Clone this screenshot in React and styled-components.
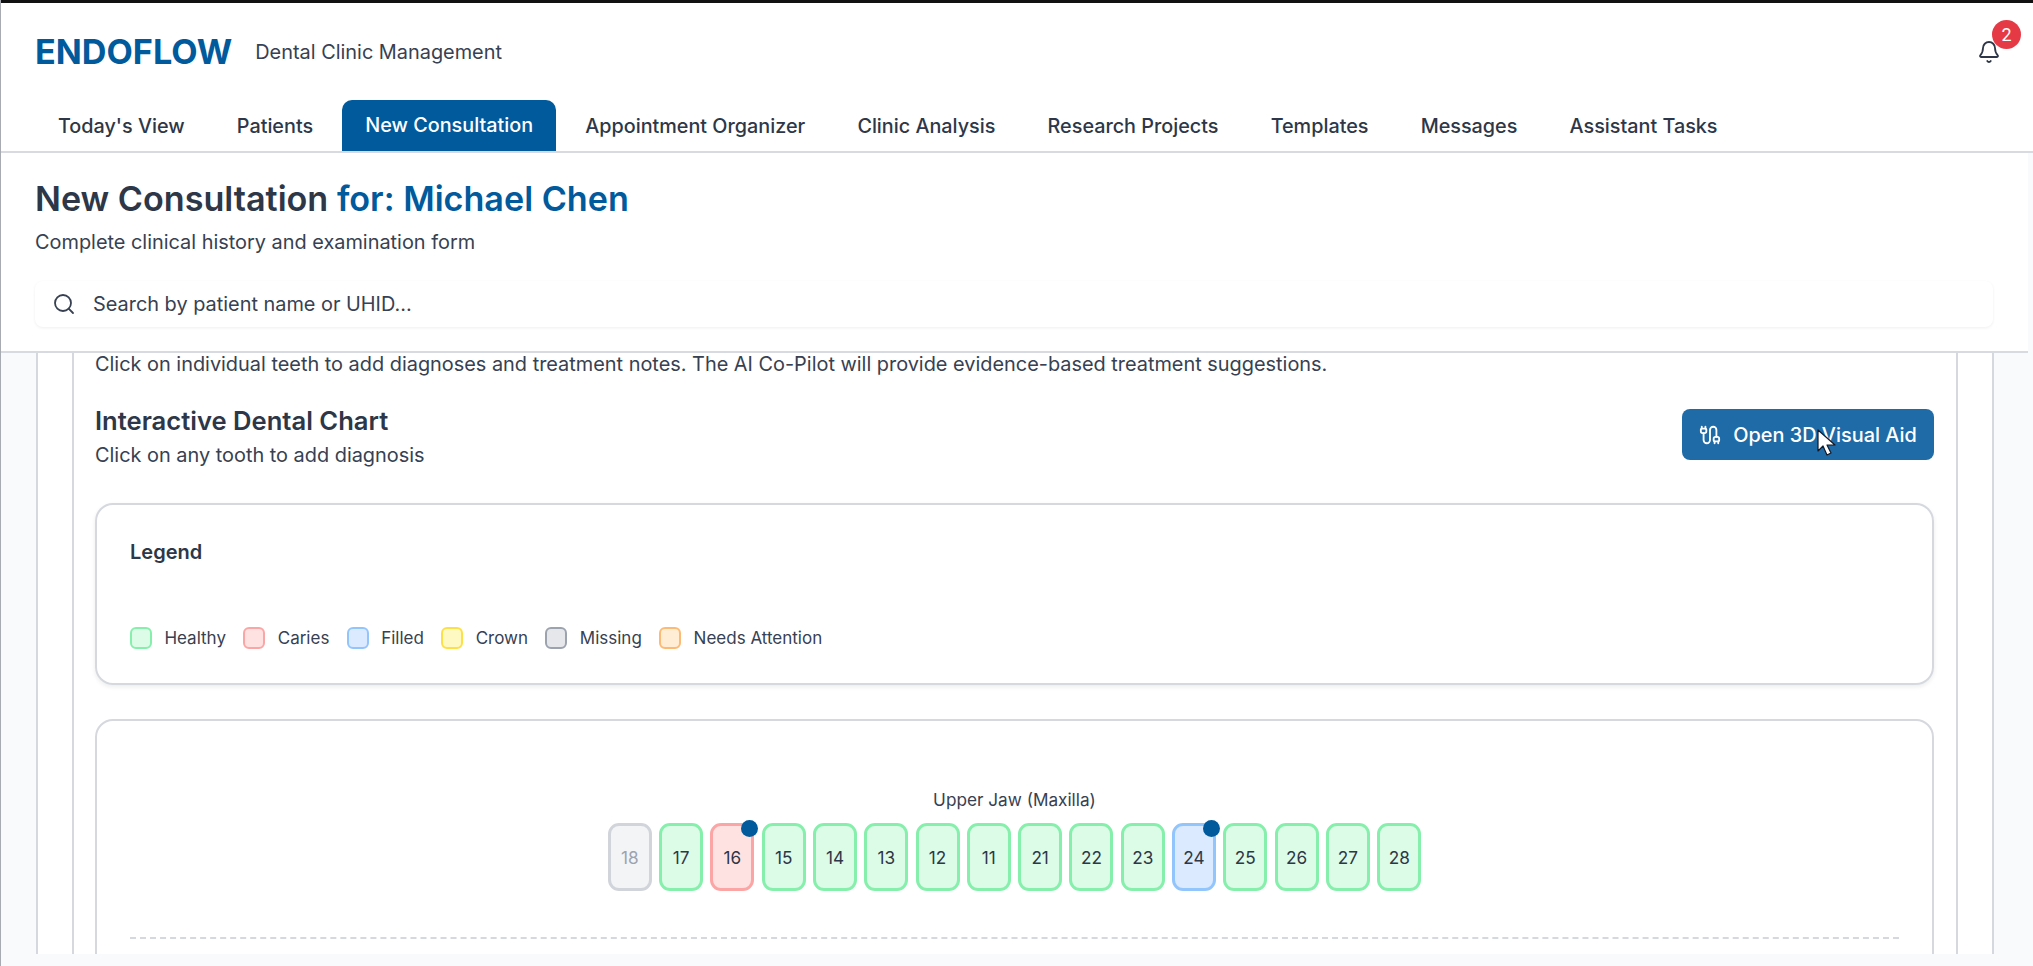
import React from "react";
import styled, { createGlobalStyle } from "styled-components";
import { Bell, Cable, Search } from "lucide-react";

const GlobalStyle = createGlobalStyle`
  html, body {
    margin: 0;
    padding: 0;
    background: #f9fafb;
    overflow: hidden;
  }
  * {
    box-sizing: border-box;
  }
`;

const tabs = [
  "Today's View",
  "Patients",
  "New Consultation",
  "Appointment Organizer",
  "Clinic Analysis",
  "Research Projects",
  "Templates",
  "Messages",
  "Assistant Tasks",
];

const legend = [
  { label: "Healthy", type: "healthy" },
  { label: "Caries", type: "caries" },
  { label: "Filled", type: "filled" },
  { label: "Crown", type: "crown" },
  { label: "Missing", type: "missing" },
  { label: "Needs Attention", type: "attention" },
];

const upperJaw = [
  { n: 18, type: "absent" },
  { n: 17, type: "healthy" },
  { n: 16, type: "caries", marked: true },
  { n: 15, type: "healthy" },
  { n: 14, type: "healthy" },
  { n: 13, type: "healthy" },
  { n: 12, type: "healthy" },
  { n: 11, type: "healthy" },
  { n: 21, type: "healthy" },
  { n: 22, type: "healthy" },
  { n: 23, type: "healthy" },
  { n: 24, type: "filled", marked: true },
  { n: 25, type: "healthy" },
  { n: 26, type: "healthy" },
  { n: 27, type: "healthy" },
  { n: 28, type: "healthy" },
];

const palette = {
  healthy: { bg: "#dcfce7", line: "#86efac" },
  caries: { bg: "#fee2e2", line: "#fca5a5" },
  filled: { bg: "#dbeafe", line: "#93c5fd" },
  crown: { bg: "#fef9c3", line: "#fde047" },
  missing: { bg: "#e5e7eb", line: "#9ca3af" },
  attention: { bg: "#ffedd5", line: "#fdba74" },
  absent: { bg: "#f3f4f6", line: "#d1d5db" },
};

export default function App() {
  return (
    <>
      <GlobalStyle />
      <Page>
        <BlackBar />
        <Header>
          <Brand>
            <Logo>ENDOFLOW</Logo>
            <Tagline>Dental Clinic Management</Tagline>
            <BellWrap>
              <Bell size={24} strokeWidth={1.8} />
              <Badge>2</Badge>
            </BellWrap>
          </Brand>
          <Tabs>
            {tabs.map((tab) => (
              <Tab key={tab} $active={tab === "New Consultation"}>
                {tab}
              </Tab>
            ))}
          </Tabs>
        </Header>
        <TitlePanel>
          <Title>
            New Consultation <span>for: Michael Chen</span>
          </Title>
          <Subtitle>Complete clinical history and examination form</Subtitle>
          <SearchBox>
            <Search size={24} strokeWidth={1.8} />
            <span>Search by patient name or UHID...</span>
          </SearchBox>
        </TitlePanel>
        <Content>
          <OuterCard>
            <InnerCard>
              <Intro>
                Click on individual teeth to add diagnoses and treatment notes.
                The AI Co-Pilot will provide evidence-based treatment
                suggestions.
              </Intro>
              <ChartHead>
                <div>
                  <ChartTitle>Interactive Dental Chart</ChartTitle>
                  <ChartHint>Click on any tooth to add diagnosis</ChartHint>
                </div>
                <VisualButton>
                  <Cable size={22} strokeWidth={2} />
                  Open 3D Visual Aid
                  <Cursor viewBox="0 0 19 27" width="19" height="27">
                    <path
                      d="M1 1v21l5-5 4 9 4-2-4-8h8z"
                      fill="#fff"
                      stroke="#111827"
                      strokeWidth="1.2"
                      strokeLinejoin="round"
                    />
                  </Cursor>
                </VisualButton>
              </ChartHead>
              <LegendCard>
                <LegendTitle>Legend</LegendTitle>
                <LegendRow>
                  {legend.map((item) => (
                    <LegendItem key={item.label}>
                      <Swatch $type={item.type} />
                      {item.label}
                    </LegendItem>
                  ))}
                </LegendRow>
              </LegendCard>
              <ChartCard>
                <JawLabel>Upper Jaw (Maxilla)</JawLabel>
                <TeethRow>
                  {upperJaw.map((tooth) => (
                    <Tooth key={tooth.n} $type={tooth.type}>
                      {tooth.n}
                      {tooth.marked && <Dot />}
                    </Tooth>
                  ))}
                </TeethRow>
                <JawDivider />
              </ChartCard>
            </InnerCard>
          </OuterCard>
        </Content>
      </Page>
    </>
  );
}

const Page = styled.div`
  width: 2033px;
  height: 966px;
  overflow: hidden;
  background: #f9fafb;
  border-left: 1px solid #a8abb2;
  font-family: Inter, "Noto Sans", sans-serif;
  color: #2d3748;
`;

const BlackBar = styled.div`
  height: 3px;
  margin-left: -1px;
  background: #111111;
`;

const Header = styled.header`
  height: 150px;
  background: #fff;
  border-bottom: 2px solid #d8dae1;
  display: flex;
  flex-direction: column;
`;

const Brand = styled.div`
  display: flex;
  align-items: center;
  height: 97px;
  padding: 0 12px 0 34px;
`;

const Logo = styled.div`
  font-size: 34.2px;
  font-weight: 700;
  color: #005a9c;
`;

const Tagline = styled.div`
  margin-left: 23px;
  font-size: 19.9px;
  color: #374151;
`;

const BellWrap = styled.div`
  position: relative;
  margin-left: auto;
  margin-right: 20px;
  display: flex;
  color: #2d3748;
`;

const Badge = styled.span`
  position: absolute;
  top: -20px;
  right: -20px;
  width: 29px;
  height: 29px;
  border-radius: 50%;
  background: #e63946;
  color: #fff;
  font-family: Roboto, sans-serif;
  font-size: 18px;
  display: flex;
  align-items: center;
  justify-content: center;
`;

const Tabs = styled.nav`
  display: flex;
  gap: 6.2px;
  padding-left: 34px;
  flex: 1;
  align-items: flex-end;
`;

const Tab = styled.div`
  height: 51px;
  padding: ${(p) => (p.$active ? "4px" : "0")} 23px 0;
  display: flex;
  align-items: center;
  padding-bottom: ${(p) => (p.$active ? "5px" : "0")};
  border-radius: 10px 10px 0 0;
  font-size: 19.8px;
  font-weight: 500;
  color: ${(p) => (p.$active ? "#fff" : "#2d3748")};
  background: ${(p) => (p.$active ? "#005a9c" : "transparent")};
`;

const TitlePanel = styled.section`
  width: 2027px;
  height: 200px;
  background: #fff;
  border-bottom: 2px solid #d8dae1;
  padding: 25px 34px 0;
`;

const Title = styled.h1`
  margin: 0;
  font-size: 34.15px;
  line-height: 42px;
  font-weight: 600;
  color: #2d3748;
  span {
    color: #005a9c;
  }
`;

const Subtitle = styled.p`
  margin: 9px 0 0;
  font-size: 19.9px;
  line-height: 26px;
  color: #374151;
`;

const SearchBox = styled.div`
  margin-top: 26px;
  width: 1958px;
  height: 46px;
  padding-left: 17px;
  display: flex;
  align-items: center;
  gap: 17px;
  background: #fff;
  border-radius: 8px;
  box-shadow: 0 1px 3px rgba(17, 24, 39, 0.07);
  font-size: 19.9px;
  color: #374151;
`;

const Content = styled.main`
  height: 601px;
  overflow: hidden;
  padding: 0 39px 0 35px;
`;

const OuterCard = styled.div`
  height: 100%;
  background: #fff;
  border: 2px solid #d5d8de;
  border-width: 0 2px;
  padding: 0 34px;
`;

const InnerCard = styled.div`
  height: 100%;
  border: 2px solid #d5d8de;
  border-width: 0 2px;
  padding: 0 22px 0 21px;
`;

const Intro = styled.p`
  margin: 0;
  font-size: 19.9px;
  line-height: 22px;
  color: #374151;
`;

const ChartHead = styled.div`
  margin-top: 30px;
  display: flex;
  justify-content: space-between;
  align-items: center;
`;

const ChartTitle = styled.h2`
  margin: 0;
  font-size: 25.6px;
  line-height: 32px;
  font-weight: 600;
  color: #2d3748;
`;

const ChartHint = styled.p`
  margin: 5px 0 0;
  font-size: 19.9px;
  line-height: 26px;
  color: #374151;
`;

const VisualButton = styled.button`
  position: relative;
  width: 252px;
  height: 51px;
  margin-top: -4px;
  border: 0;
  border-radius: 8px;
  background: #1e6ba8;
  color: #fff;
  font-family: inherit;
  font-size: 19.9px;
  font-weight: 500;
  display: flex;
  align-items: center;
  justify-content: center;
  gap: 12px;
`;

const Cursor = styled.svg`
  position: absolute;
  left: 135px;
  top: 20px;
`;

const LegendCard = styled.div`
  margin-top: 35px;
  height: 182px;
  border: 2px solid #d5d8de;
  border-radius: 18px;
  box-shadow: 0 2px 4px rgba(17, 24, 39, 0.08);
  padding: 34px 33px 0;
`;

const LegendTitle = styled.div`
  font-size: 20px;
  line-height: 26px;
  font-weight: 600;
  color: #2d3748;
`;

const LegendRow = styled.div`
  margin-top: 62px;
  display: flex;
  gap: 17.4px;
`;

const LegendItem = styled.div`
  display: flex;
  align-items: center;
  gap: 12.4px;
  font-size: 17px;
  line-height: 22px;
  color: #374151;
`;

const Swatch = styled.span`
  width: 22px;
  height: 22px;
  border-radius: 6px;
  border: 2px solid ${(p) => palette[p.$type].line};
  background: ${(p) => palette[p.$type].bg};
`;

const ChartCard = styled.div`
  margin-top: 34px;
  height: 300px;
  border: 2px solid #d5d8de;
  border-radius: 18px;
  padding: 67px 33px 0;
`;

const JawLabel = styled.div`
  text-align: center;
  font-size: 17.2px;
  line-height: 24px;
  color: #374151;
`;

const TeethRow = styled.div`
  margin-top: 11px;
  display: flex;
  justify-content: center;
  gap: 7.3px;
`;

const Tooth = styled.div`
  position: relative;
  width: 44px;
  height: 68px;
  border-radius: 11px;
  border: 3px solid ${(p) => palette[p.$type].line};
  background: ${(p) => palette[p.$type].bg};
  color: ${(p) => (p.$type === "absent" ? "#9ca3af" : "#2d3748")};
  display: flex;
  align-items: center;
  justify-content: center;
  font-size: 17.2px;
  font-weight: 400;
`;

const Dot = styled.span`
  position: absolute;
  top: -6px;
  right: -7px;
  width: 17px;
  height: 17px;
  border-radius: 50%;
  background: #005a9c;
`;

const JawDivider = styled.div`
  margin-top: 46px;
  border-top: 2px dashed #d5d8de;
`;
